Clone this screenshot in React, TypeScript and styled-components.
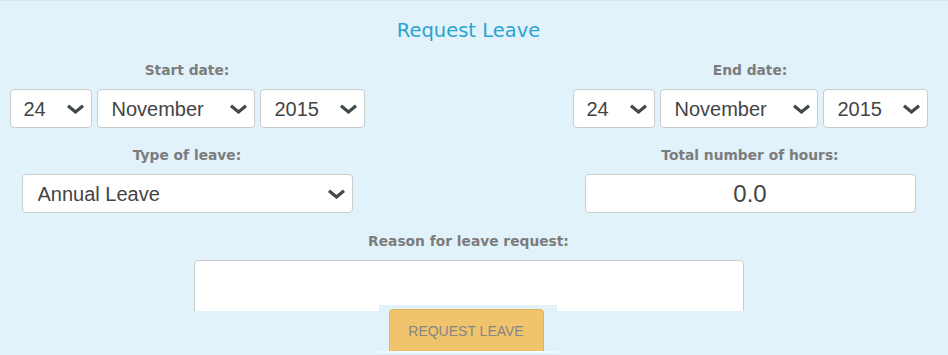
import styled, { createGlobalStyle } from 'styled-components';

const GlobalStyle = createGlobalStyle`
  html, body {
    margin: 0;
    padding: 0;
    background: #e1f2fa;
  }
`;

const Panel = styled.div`
  width: 948px;
  height: 355px;
  box-sizing: border-box;
  overflow: hidden;
  background-color: #e1f2fa;
  border-top: 1px solid #d2e7f1;
  padding: 18px 11px 0 0;
  display: flex;
  flex-direction: column;
  align-items: center;
`;

const Title = styled.h2`
  margin: 0 0 19px;
  font-family: 'DejaVu Sans', Verdana, sans-serif;
  font-weight: 400;
  font-size: 19.5px;
  line-height: 24px;
  color: #2aa4cf;
`;

const Row = styled.div<{ $gapBelow: number }>`
  width: 100%;
  display: grid;
  grid-template-columns: 374px 1fr 374px;
  margin-bottom: ${(p) => p.$gapBelow}px;
`;

const Field = styled.div<{ $col: number }>`
  grid-column: ${(p) => p.$col};
  display: flex;
  flex-direction: column;
  align-items: center;
`;

const Label = styled.label`
  display: block;
  margin-bottom: 11px;
  font-family: 'DejaVu Sans', Verdana, sans-serif;
  font-weight: 700;
  font-size: 13.8px;
  line-height: 16px;
  color: #7c7c7c;
`;

const DateGroup = styled.div`
  display: flex;
  gap: 5px;
`;

const SelectWrap = styled.div<{ $width: number }>`
  position: relative;
  width: ${(p) => p.$width}px;
  height: 39px;
`;

const Select = styled.select<{ $padLeft: number }>`
  appearance: none;
  -webkit-appearance: none;
  width: 100%;
  height: 100%;
  box-sizing: border-box;
  margin: 0;
  padding: 1px 30px 0 ${(p) => p.$padLeft}px;
  background: #fff;
  border: 1px solid #cbcbcb;
  border-radius: 4px;
  font-family: 'Liberation Sans', Arial, sans-serif;
  font-size: 20px;
  color: #444;
  outline: none;
`;

const Chevron = styled.svg`
  position: absolute;
  right: 7px;
  top: 50%;
  width: 19px;
  height: 10px;
  margin-top: -5px;
  pointer-events: none;
`;

const HoursInput = styled.input`
  width: 331px;
  height: 39px;
  box-sizing: border-box;
  margin: 0;
  padding: 0 10px;
  background: #fff;
  border: 1px solid #cbcbcb;
  border-radius: 4px;
  font-family: 'Liberation Sans', Arial, sans-serif;
  font-size: 24px;
  color: #444;
  text-align: center;
  outline: none;
`;

const ReasonField = styled.div`
  display: flex;
  flex-direction: column;
  align-items: center;
`;

const ReasonClip = styled.div`
  width: 550px;
  height: 51px;
  overflow: hidden;
`;

const Reason = styled.textarea`
  display: block;
  width: 550px;
  height: 90px;
  box-sizing: border-box;
  margin: 0;
  padding: 6px 10px;
  background: #fff;
  border: 1px solid #cbcbcb;
  border-radius: 4px;
  resize: none;
  outline: none;
`;

const ButtonWrap = styled.div`
  position: relative;
  margin-top: -6px;
  margin-left: -2px;
  width: 178px;
  height: 48px;
  box-sizing: border-box;
  padding: 4px 13px 0 10px;
  background-color: #e1f2fa;
  border-bottom: 2px solid #f4fafd;
  overflow: hidden;
`;

const SubmitButton = styled.button`
  display: block;
  width: 155px;
  height: 46px;
  margin: 0;
  padding: 0 0 2px;
  background-color: #f0c36d;
  border: 1px solid #e2b35c;
  border-radius: 4px;
  font-family: 'Liberation Sans', Arial, sans-serif;
  font-size: 14px;
  color: #858585;
  text-transform: uppercase;
`;

const days = Array.from({ length: 31 }, (_, i) => String(i + 1));
const months = [
  'January', 'February', 'March', 'April', 'May', 'June',
  'July', 'August', 'September', 'October', 'November', 'December',
];
const years = ['2014', '2015', '2016'];

const DropDown = ({
  width,
  padLeft,
  value,
  options,
}: {
  width: number;
  padLeft: number;
  value: string;
  options: string[];
}) => (
  <SelectWrap $width={width}>
    <Select $padLeft={padLeft} defaultValue={value}>
      {options.map((o) => (
        <option key={o} value={o}>
          {o}
        </option>
      ))}
    </Select>
    <Chevron viewBox="0 0 19 10">
      <polyline
        points="2,1.8 9.5,8 17,1.8"
        fill="none"
        stroke="#424a4a"
        strokeWidth="3.2"
        strokeLinejoin="miter"
      />
    </Chevron>
  </SelectWrap>
);

const DatePicker = ({ label }: { label: string }) => (
  <>
    <Label>{label}</Label>
    <DateGroup>
      <DropDown width={82} padLeft={13} value="24" options={days} />
      <DropDown width={158} padLeft={14} value="November" options={months} />
      <DropDown width={105} padLeft={14} value="2015" options={years} />
    </DateGroup>
  </>
);

const App = () => {
  return (
    <>
      <GlobalStyle />
      <Panel>
        <Title>Request Leave</Title>
        <Row $gapBelow={19}>
          <Field $col={1}>
            <DatePicker label="Start date:" />
          </Field>
          <Field $col={3}>
            <DatePicker label="End date:" />
          </Field>
        </Row>
        <Row $gapBelow={20}>
          <Field $col={1}>
            <Label>Type of leave:</Label>
            <DropDown
              width={331}
              padLeft={15}
              value="Annual Leave"
              options={['Annual Leave', 'Sick Leave', 'Unpaid Leave']}
            />
          </Field>
          <Field $col={3}>
            <Label>Total number of hours:</Label>
            <HoursInput defaultValue="0.0" />
          </Field>
        </Row>
        <ReasonField>
          <Label>Reason for leave request:</Label>
          <ReasonClip>
            <Reason />
          </ReasonClip>
          <ButtonWrap>
            <SubmitButton>Request Leave</SubmitButton>
          </ButtonWrap>
        </ReasonField>
      </Panel>
    </>
  );
};

export default App;
